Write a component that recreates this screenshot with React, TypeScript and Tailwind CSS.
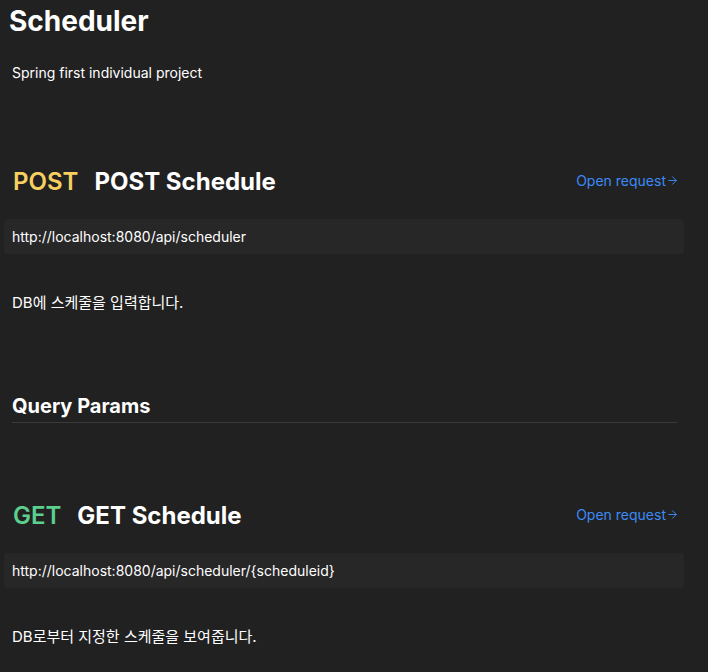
import { ArrowRight } from "lucide-react";

interface Endpoint {
  method: string;
  methodColor: string;
  name: string;
  url: string;
  description: string;
  queryParams?: boolean;
}

const endpoints: Endpoint[] = [
  {
    method: "POST",
    methodColor: "text-[#f7d060]",
    name: "POST Schedule",
    url: "http://localhost:8080/api/scheduler",
    description: "DB에 스케줄을 입력합니다.",
    queryParams: true,
  },
  {
    method: "GET",
    methodColor: "text-[#5ccf8e]",
    name: "GET Schedule",
    url: "http://localhost:8080/api/scheduler/{scheduleid}",
    description: "DB로부터 지정한 스케줄을 보여줍니다.",
  },
];

function EndpointSection({ endpoint, first }: { endpoint: Endpoint; first: boolean }) {
  return (
    <section className={first ? "pt-[82px]" : "pt-[76px]"}>
      <div className="flex h-[34px] items-center justify-between pl-[13px] pr-[29px]">
        <h2 className="flex items-center gap-[16px] text-[24px] leading-[34px]">
          <span className={`font-semibold ${endpoint.methodColor}`}>{endpoint.method}</span>
          <span className="font-bold text-white">{endpoint.name}</span>
        </h2>
        <a className="mb-[3px] flex items-center text-[14px] leading-[20px] text-[#3d8af7]">
          Open request
          <ArrowRight className="h-[13px] w-[13px]" strokeWidth={1.75} />
        </a>
      </div>
      <div className="mt-[20px] ml-[4px] mr-[24px] flex h-[35px] items-center rounded-[4px] bg-[#272727] px-[8px] text-[14px] text-white">
        {endpoint.url}
      </div>
      <p className="mt-[39px] pl-[12px] text-[15px] leading-[20px] text-white">
        {endpoint.description}
      </p>
      {endpoint.queryParams && (
        <div className="mt-[79px] ml-[12px] mr-[31px] border-b border-[#3a3a3a] pb-[2px]">
          <h3 className="text-[20px] font-bold leading-[28px] text-white">Query Params</h3>
        </div>
      )}
    </section>
  );
}

export default function App() {
  return (
    <div
      className="min-h-[672px] w-[708px] overflow-hidden bg-[#212121] text-white"
      style={{ fontFamily: 'Inter, "Noto Sans CJK KR", sans-serif' }}
    >
      <h1 className="pl-[9px] pt-[3px] text-[28px] font-bold leading-[36px]">Scheduler</h1>
      <p className="mt-[24px] pl-[12px] text-[14px] leading-[20px]">Spring first individual project</p>
      {endpoints.map((e, i) => (
        <EndpointSection key={e.name} endpoint={e} first={i === 0} />
      ))}
    </div>
  );
}
